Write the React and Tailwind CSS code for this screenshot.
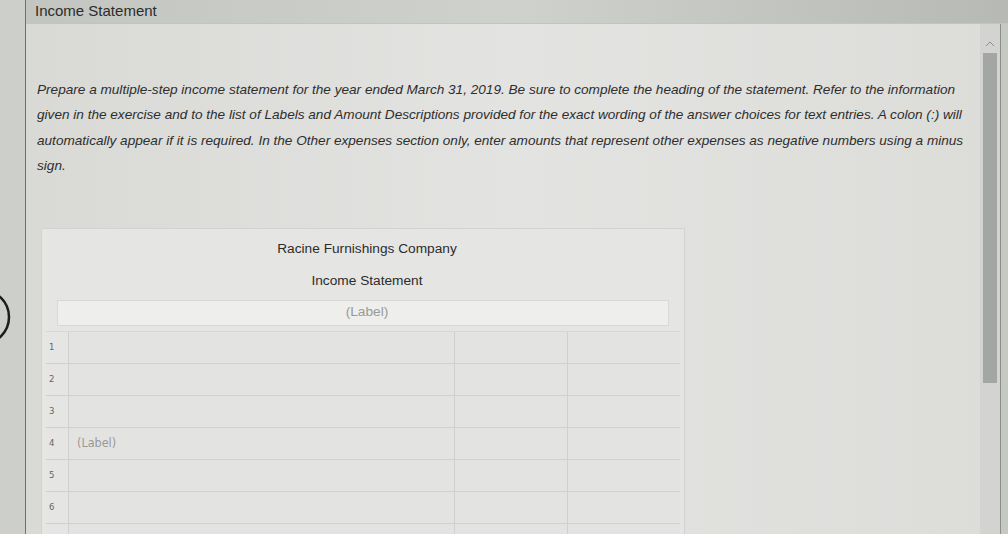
import React from 'react';

const lines = [
  'Prepare a multiple-step income statement for the year ended March 31, 2019. Be sure to complete the heading of the statement. Refer to the information',
  'given in the exercise and to the list of Labels and Amount Descriptions provided for the exact wording of the answer choices for text entries. A colon (:) will',
  'automatically appear if it is required. In the Other expenses section only, enter amounts that represent other expenses as negative numbers using a minus',
  'sign.',
];

const rows = [1, 2, 3, 4, 5, 6, 7];

export default function App() {
  return (
    <div className="relative flex h-[534px] w-[1008px] overflow-hidden bg-[#cfd0cc] font-['Liberation_Sans',Arial,sans-serif]">
      {/* left bezel with the ring */}
      <div className="relative w-[25px] shrink-0 bg-[#cdcfca]">
        <svg className="absolute left-0 top-[282px]" width="14" height="70" viewBox="0 0 14 70">
          <circle cx="-18" cy="35" r="27" fill="none" stroke="#1d1d1d" strokeWidth="2.5" />
        </svg>
      </div>
      <div className="flex flex-1 flex-col border-l border-[#6f716d]">
        {/* header */}
        <div className="flex h-[30px] items-center border-b border-[#c2c4bf] bg-gradient-to-r from-[#c3c5c1] via-[#cfd1cc] to-[#b7b9b4] pl-[9px] text-[15px] text-[#2c2c2c]">
          Income Statement
        </div>
        <div className="flex flex-1 bg-gradient-to-r from-[#d9dad6] via-[#e3e3e1] to-[#dcdcd9]">
          <div className="flex flex-1 flex-col pl-[11px] pt-[53px]">
            <div className="text-[13.6px] italic leading-[25.5px] text-[#2e2e2e]">
              {lines.map((l) => (
                <div key={l} className="whitespace-nowrap">{l}</div>
              ))}
            </div>
            {/* statement box */}
            <div className="mt-[49px] ml-[4px] flex w-[644px] flex-col border border-[#d2d2d0] bg-[#e5e5e3] px-[4px]">
              <div className="pl-[8px] pt-[10px] text-center text-[13.7px] text-[#2c2c2c]">Racine Furnishings Company</div>
              <div className="pl-[8px] pt-[12px] text-center text-[13.7px] text-[#2c2c2c]">Income Statement</div>
              <div className="mx-[11px] mt-[8px] flex h-[26px] items-center justify-center border border-[#d8d8d6] bg-[#eeeeec] pl-[8px] text-[13.7px] text-[#9a9a98]">
                (Label)
              </div>
              <div className="mt-[5px] flex flex-col border-t border-[#d6d6d4]">
                {rows.map((n) => (
                  <div key={n} className="flex h-[32px] border-b border-[#d0d0ce]">
                    <div className="flex w-[22px] items-center pl-[3px] font-['DejaVu_Sans_Condensed',sans-serif] text-[9.5px] text-[#666]">
                      {n < 7 ? n : ''}
                    </div>
                    <div className="flex w-[386px] items-center border-l border-[#d0d0ce] bg-[#e3e3e1] pl-[8px] font-['DejaVu_Sans_Condensed',sans-serif] text-[12.5px] text-[#999]">
                      {n === 4 ? '(Label)' : ''}
                    </div>
                    <div className="w-[113px] border-l border-[#d0d0ce] bg-[#e3e3e1]" />
                    <div className="w-[113px] border-l border-[#d0d0ce] bg-[#e3e3e1]" />
                  </div>
                ))}
              </div>
            </div>
          </div>
          {/* scrollbar */}
          <div className="flex w-[20px] flex-col items-center bg-[#d3d4d1]">
            <svg className="mt-[17px]" width="10" height="6" viewBox="0 0 10 6">
              <path d="M1 5 L5 1 L9 5" fill="none" stroke="#8a8a88" strokeWidth="1" />
            </svg>
            <div className="mt-[6px] h-[330px] w-[14px] bg-[#a4a6a3]" />
            <div className="flex-1" />
            <svg className="mb-[6px]" width="10" height="6" viewBox="0 0 10 6">
              <path d="M1 1 L5 5 L9 1" fill="none" stroke="#8a8a88" strokeWidth="1" />
            </svg>
          </div>
          <div className="w-[8px] border-l border-[#8d8f8b] bg-[#c6c8c3]" />
        </div>
      </div>
    </div>
  );
}
